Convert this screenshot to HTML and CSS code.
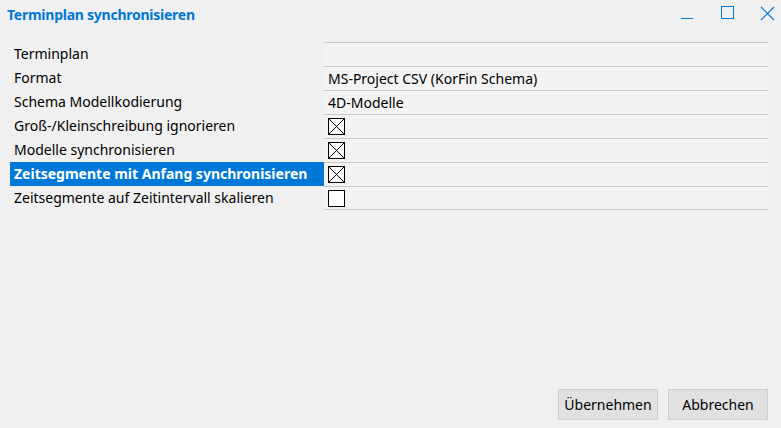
FILE: index.html
```html
<!DOCTYPE html>
<html>
<head>
<meta charset="utf-8">
<link rel="stylesheet" href="styles.css">
</head>
<body>
<div class="window">
  <div class="titlebar">
    <div class="title">Terminplan synchronisieren</div>
    <div class="controls">
      <svg class="ctl" width="14" height="14" viewBox="0 0 14 14"><path d="M1 12.5H13" stroke="#0078d7" stroke-width="1" fill="none"/></svg>
      <svg class="ctl" width="14" height="14" viewBox="0 0 14 14"><rect x="1.5" y="0.5" width="12" height="12" stroke="#0078d7" stroke-width="1" fill="none"/></svg>
      <svg class="ctl" width="15" height="15" viewBox="0 0 15 15"><path d="M1 1L14 14M14 1L1 14" stroke="#0078d7" stroke-width="1.2" fill="none"/></svg>
    </div>
  </div>
  <div class="props">
    <div class="label">Terminplan</div><div class="value"></div>
    <div class="label">Format</div><div class="value">MS-Project CSV (KorFin Schema)</div>
    <div class="label">Schema Modellkodierung</div><div class="value">4D-Modelle</div>
    <div class="label">Groß-/Kleinschreibung ignorieren</div><div class="value"><span class="cb checked"></span></div>
    <div class="label">Modelle synchronisieren</div><div class="value"><span class="cb checked"></span></div>
    <div class="label selected">Zeitsegmente mit Anfang synchronisieren</div><div class="value"><span class="cb checked"></span></div>
    <div class="label">Zeitsegmente auf Zeitintervall skalieren</div><div class="value last"><span class="cb"></span></div>
  </div>
  <div class="spacer"></div>
  <div class="footer">
    <button class="btn">Übernehmen</button>
    <button class="btn">Abbrechen</button>
  </div>
</div>
</body>
</html>
```
FILE: styles.css
```css
html, body {
  margin: 0;
  padding: 0;
  background: #f0f0f0;
  font-family: "Noto Sans", "Open Sans", sans-serif;
  font-size: 14px;
  color: #000;
}
.window {
  width: 781px;
  height: 428px;
  display: flex;
  flex-direction: column;
}
.titlebar {
  height: 28px;
  display: flex;
  align-items: center;
  justify-content: space-between;
  padding-left: 7px;
  padding-right: 6px;
}
.title {
  color: #0078d7;
  font-weight: bold;
  font-size: 14px;
  letter-spacing: -0.25px;
}
.controls {
  display: flex;
  align-items: center;
  gap: 26px;
  margin-top: -2px;
}
.props {
  margin: 14px 13px 0 10px;
  display: grid;
  grid-template-columns: 314px 444px;
  grid-auto-rows: 24px;
}
.label {
  padding-left: 4px;
  padding-bottom: 1px;
  display: flex;
  align-items: center;
  white-space: nowrap;
}
.label.selected {
  background: #0078d7;
  color: #fff;
  font-weight: bold;
}
.value {
  background: #f3f3f3;
  border-top: 1px solid #c8c8c8;
  padding-left: 4px;
  display: flex;
  align-items: center;
  white-space: nowrap;
}
.value.last {
  border-bottom: 1px solid #c8c8c8;
  height: 22px;
}
.cb {
  width: 15px;
  height: 15px;
  border: 1px solid #000;
  background: #fff;
  display: inline-block;
}
.cb.checked {
  background:
    linear-gradient(to top right, transparent calc(50% - 0.7px), #000 calc(50% - 0.7px), #000 calc(50% + 0.7px), transparent calc(50% + 0.7px)),
    linear-gradient(to bottom right, transparent calc(50% - 0.7px), #000 calc(50% - 0.7px), #000 calc(50% + 0.7px), transparent calc(50% + 0.7px)),
    #fff;
}
.spacer {
  flex: 1;
}
.footer {
  display: flex;
  justify-content: flex-end;
  gap: 10px;
  padding: 0 13px 8px 0;
}
.btn {
  width: 100px;
  height: 31px;
  background: #e1e1e1;
  border: 1px solid #cfcfcf;
  font-family: "Noto Sans", "Open Sans", sans-serif;
  font-size: 14px;
  color: #000;
  padding: 0;
}
```
